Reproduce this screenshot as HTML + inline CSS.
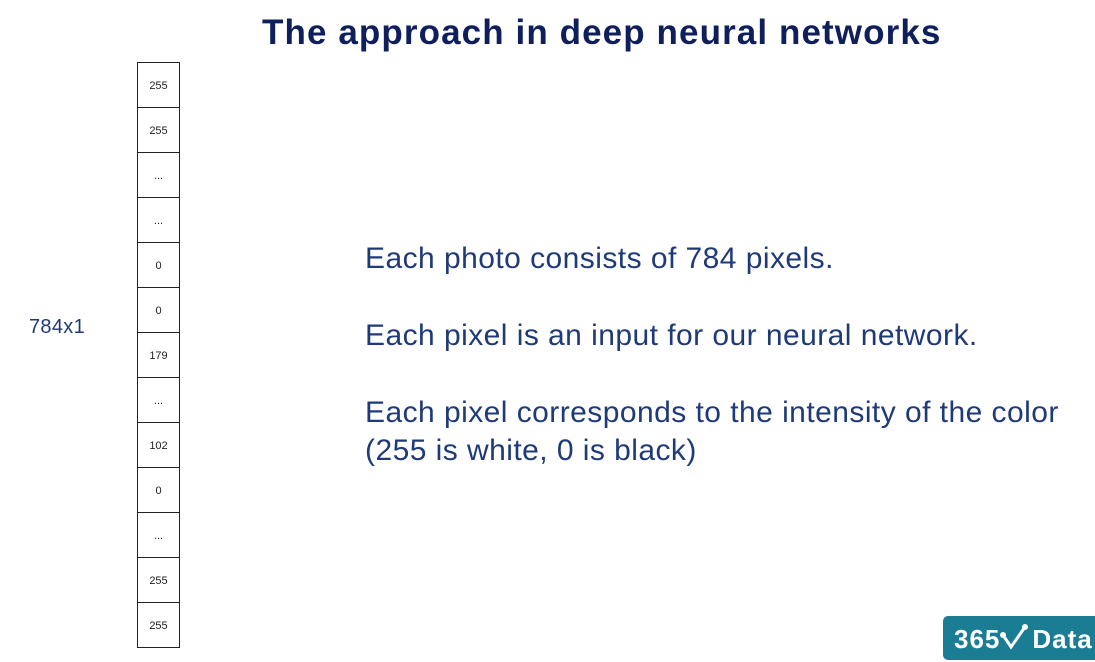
<!DOCTYPE html>
<html><head><style>
body{margin:0;width:1095px;height:658px;background:#fff;position:relative;overflow:hidden;font-family:"Liberation Sans",sans-serif}
.t{position:absolute;left:262px;top:13px;font-size:35px;font-weight:bold;color:#0f1f5c;white-space:nowrap;letter-spacing:1.1px}
.col{position:absolute;left:137px;top:62px;width:41px;border:1px solid #222;border-bottom:none}
.c{height:44px;border-bottom:1px solid #222;font-size:11px;color:#222;text-align:center;line-height:47px}
.p{position:absolute;left:365px;font-size:30px;color:#1f3a78;white-space:nowrap;letter-spacing:0.45px}
.l{position:absolute;left:29px;top:316px;font-size:20px;color:#1f3a78;letter-spacing:0.3px}
.logo{position:absolute;left:943px;top:616px;width:160px;height:44px;background:#1a7d93;border-radius:5px;color:#fff;font-weight:bold;font-size:26px;line-height:46px;padding-left:11px;box-sizing:border-box;white-space:nowrap;letter-spacing:1px}
</style></head><body>
<div class="t">The approach in deep neural networks</div>
<div class="col">
<div class="c">255</div><div class="c">255</div><div class="c">...</div><div class="c">...</div><div class="c">0</div><div class="c">0</div><div class="c">179</div><div class="c">...</div><div class="c">102</div><div class="c">0</div><div class="c">...</div><div class="c">255</div><div class="c">255</div>
</div>
<div class="l">784x1</div>
<div class="p" style="top:242px">Each photo consists of 784 pixels.</div>
<div class="p" style="top:319px">Each pixel is an input for our neural network.</div>
<div class="p" style="top:396px">Each pixel corresponds to the intensity of the color</div>
<div class="p" style="top:434px">(255 is white, 0 is black)</div>
<div class="logo">365<svg width="32" height="28" viewBox="0 0 32 28" style="vertical-align:-3px"><path d="M3 12 L11 24 L25 4" stroke="#fff" stroke-width="3" fill="none"/><circle cx="3" cy="12" r="3" fill="#fff"/><circle cx="25" cy="4" r="3" fill="#fff"/></svg>Data</div>
</body></html>
